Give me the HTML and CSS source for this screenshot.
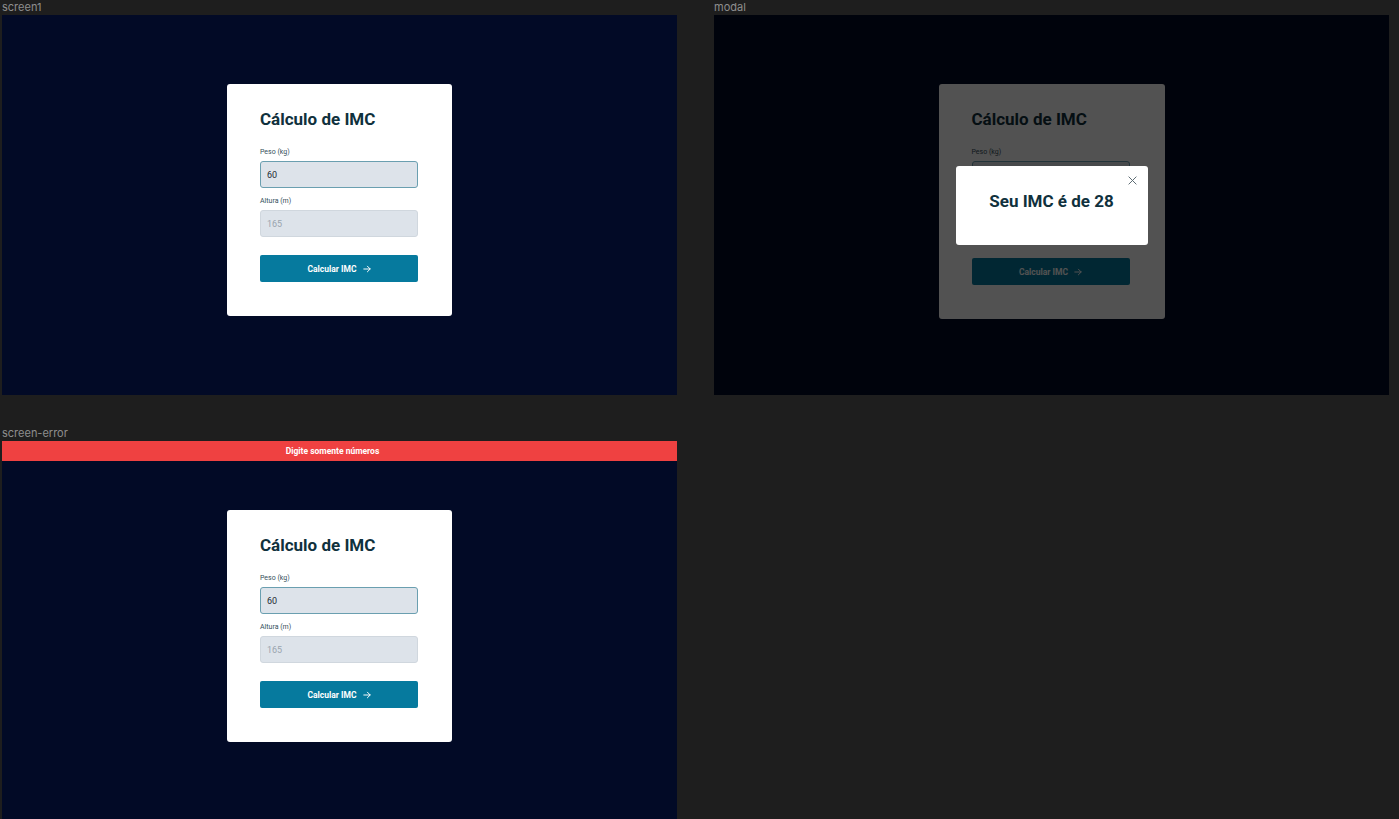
FILE: index.html
```html
<!DOCTYPE html>
<html lang="pt-BR">
<head>
<meta charset="utf-8">
<title>Cálculo de IMC</title>
<link rel="stylesheet" href="styles.css">
</head>
<body>
<main class="canvas">
  <section class="board">
    <div class="board-label">screen1</div>
    <div class="frame">
      <form class="card">
        <h1 class="card-title">Cálculo de IMC</h1>
        <label class="field-label" for="peso1">Peso (kg)</label>
        <input class="field field-active" id="peso1" type="text" value="60">
        <label class="field-label" for="altura1">Altura (m)</label>
        <input class="field" id="altura1" type="text" placeholder="165">
        <button class="btn" type="button">Calcular IMC
          <svg class="btn-arrow" viewBox="0 0 10 10" width="8" height="8"><path d="M1 5h8M5.5 1.5 9 5 5.5 8.5" fill="none" stroke="currentColor" stroke-width="1.2" stroke-linecap="round" stroke-linejoin="round"/></svg>
        </button>
      </form>
    </div>
  </section>

  <section class="board">
    <div class="board-label">modal</div>
    <div class="frame">
      <form class="card card-tall" aria-hidden="true">
        <h1 class="card-title">Cálculo de IMC</h1>
        <label class="field-label" for="peso2">Peso (kg)</label>
        <input class="field field-active" id="peso2" type="text" value="">
        <label class="field-label" for="altura2">Altura (m)</label>
        <input class="field" id="altura2" type="text" placeholder="">
        <button class="btn" type="button">Calcular IMC
          <svg class="btn-arrow" viewBox="0 0 10 10" width="8" height="8"><path d="M1 5h8M5.5 1.5 9 5 5.5 8.5" fill="none" stroke="currentColor" stroke-width="1.2" stroke-linecap="round" stroke-linejoin="round"/></svg>
        </button>
      </form>
      <div class="overlay">
        <div class="dialog">
          <button class="dialog-close" type="button" aria-label="Fechar">
            <svg viewBox="0 0 10 10" width="9" height="9"><path d="M1 1l8 8M9 1 1 9" fill="none" stroke="currentColor" stroke-width="1.1" stroke-linecap="round"/></svg>
          </button>
          <p class="dialog-text">Seu IMC é de 28</p>
        </div>
      </div>
    </div>
  </section>

  <section class="board">
    <div class="board-label">screen-error</div>
    <div class="frame">
      <div class="error-banner">Digite somente números</div>
      <form class="card">
        <h1 class="card-title">Cálculo de IMC</h1>
        <label class="field-label" for="peso3">Peso (kg)</label>
        <input class="field field-active" id="peso3" type="text" value="60">
        <label class="field-label" for="altura3">Altura (m)</label>
        <input class="field" id="altura3" type="text" placeholder="165">
        <button class="btn" type="button">Calcular IMC
          <svg class="btn-arrow" viewBox="0 0 10 10" width="8" height="8"><path d="M1 5h8M5.5 1.5 9 5 5.5 8.5" fill="none" stroke="currentColor" stroke-width="1.2" stroke-linecap="round" stroke-linejoin="round"/></svg>
        </button>
      </form>
    </div>
  </section>
</main>
</body>
</html>
```

FILE: styles.css
```css
* { box-sizing: border-box; }

html, body {
  margin: 0;
  padding: 0;
  background: #1e1e1e;
  height: 100%;
  overflow: hidden;
}

body {
  font-family: Roboto, "Liberation Sans", sans-serif;
}

.canvas {
  display: grid;
  grid-template-columns: 675px 675px;
  column-gap: 37px;
  row-gap: 31px;
  padding-left: 2px;
}

.board {
  display: flex;
  flex-direction: column;
}

.board-label {
  height: 15px;
  font-family: Inter, "Noto Sans", sans-serif;
  font-size: 11px;
  line-height: 14px;
  color: #8e8e8e;
  white-space: nowrap;
}

.frame {
  position: relative;
  height: 380px;
  background: #020a26;
  display: flex;
  justify-content: center;
  align-items: flex-start;
  padding-top: 69px;
  overflow: hidden;
}

.card {
  width: 225px;
  background: #ffffff;
  border-radius: 3px;
  padding: 26px 33px 34px;
  display: flex;
  flex-direction: column;
  margin: 0;
}

.card-tall {
  width: 226px;
}

.card-tall .btn { margin-top: 12px; }

.card-title {
  margin: 0 0 19px;
  font-size: 17px;
  line-height: 19px;
  font-weight: 700;
  color: #10313d;
}

.field-label {
  font-size: 7px;
  line-height: 9px;
  color: #34505b;
  margin-bottom: 4px;
}

.field {
  width: 158px;
  height: 27px;
  border: 1px solid #d0d7de;
  border-radius: 3px;
  background: #dde3ea;
  padding: 0 6px;
  font-family: Roboto, "Liberation Sans", sans-serif;
  font-size: 9px;
  color: #1d2b33;
  margin: 0 0 9px;
  outline: none;
}

.field-active {
  border-color: #6a9fb0;
}

.field::placeholder {
  color: #9aa4ae;
  opacity: 1;
}

.btn {
  margin-top: 9px;
  width: 158px;
  height: 27px;
  border: 0;
  border-radius: 2px;
  background: #067a9e;
  color: #ffffff;
  font-family: Roboto, "Liberation Sans", sans-serif;
  font-size: 8.5px;
  font-weight: 700;
  display: flex;
  align-items: center;
  justify-content: center;
  gap: 6px;
  padding: 0;
}

.btn-arrow { display: block; }

.overlay {
  position: absolute;
  inset: 0;
  background: rgba(0, 0, 0, 0.68);
  display: flex;
  align-items: center;
  justify-content: center;
}

.dialog {
  position: relative;
  width: 192px;
  height: 79px;
  background: #ffffff;
  border-radius: 3px;
  padding-top: 26px;
  text-align: center;
}

.dialog-text {
  margin: 0;
  font-size: 17px;
  line-height: 19px;
  font-weight: 700;
  color: #10313d;
}

.dialog-close {
  position: absolute;
  top: 10px;
  right: 10px;
  width: 10px;
  height: 10px;
  padding: 0;
  border: 0;
  background: transparent;
  color: #5c6b72;
  display: flex;
  align-items: center;
  justify-content: center;
}

.error-banner {
  position: absolute;
  top: 0;
  left: 0;
  right: 0;
  height: 20px;
  background: #ef4141;
  color: #ffffff;
  font-size: 8.5px;
  font-weight: 700;
  line-height: 20px;
  text-align: center;
  padding-right: 14px;
}
```
